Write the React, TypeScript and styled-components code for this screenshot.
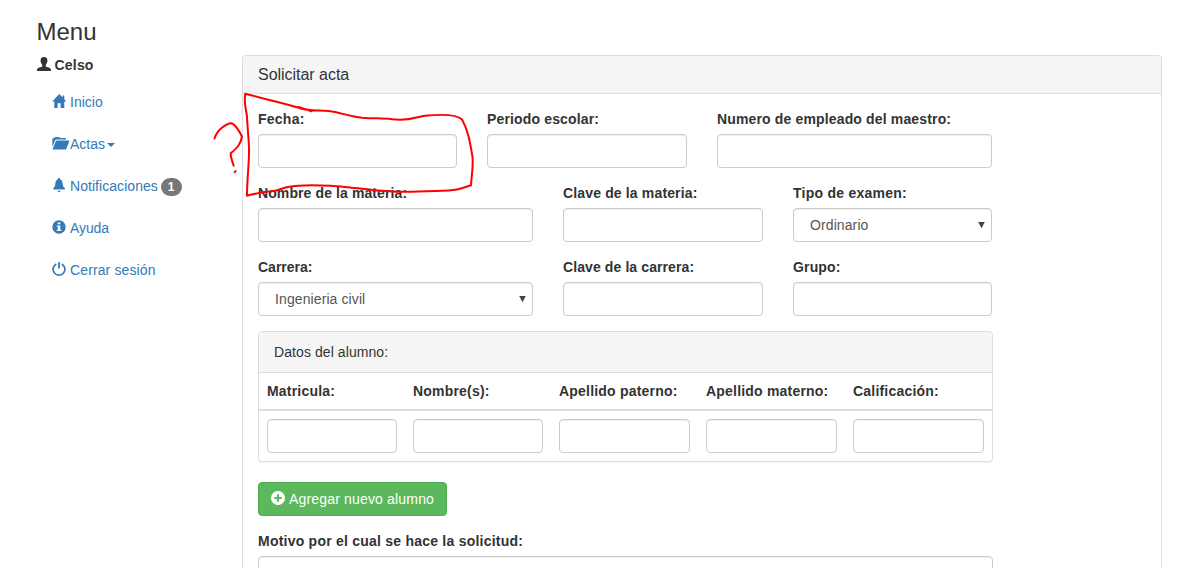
import React from 'react';
import styled, { createGlobalStyle, css } from 'styled-components';

const GlobalStyle = createGlobalStyle`
  *, *::before, *::after { box-sizing: border-box; }
  body {
    margin: 0;
    background: #fff;
    color: #333;
    font: 14px/20px "Liberation Sans", Arial, sans-serif;
  }
`;

const Page = styled.div`
  position: relative;
  display: flex;
  height: 568px;
  overflow: hidden;
`;

const Sidebar = styled.aside`
  width: 242px;
  flex: none;
  padding: 19px 0 0 36.5px;
`;

const MenuTitle = styled.h3`
  margin: 0 0 10px;
  font-size: 24px;
  line-height: 26px;
  font-weight: 400;
`;

const UserName = styled.div`
  display: flex;
  align-items: center;
  gap: 4px;
  height: 20px;
  font-weight: 700;
  letter-spacing: 0.2px;
`;

const Nav = styled.nav`
  display: flex;
  flex-direction: column;
  gap: 2px;
  margin-top: 7px;
`;

const NavLink = styled.a<{ $spacing?: number }>`
  display: flex;
  align-items: center;
  height: 40px;
  padding: 0 15px;
  color: #337ab7;
  text-decoration: none;
  letter-spacing: ${(p) => p.$spacing ?? 0}px;
`;

const NavIcon = styled.span`
  display: flex;
  width: 18.5px;
  flex: none;
`;

const Caret = styled.span`
  margin-left: 2px;
  margin-top: 2px;
  border-top: 4px solid;
  border-left: 4px solid transparent;
  border-right: 4px solid transparent;
`;

const Badge = styled.span`
  margin: 1px 0 0 3px;
  height: 18px;
  padding: 3px 7px;
  border-radius: 10px;
  background: #777;
  color: #fff;
  font-size: 12px;
  line-height: 12px;
  font-weight: 700;
`;

const Panel = styled.section<{ $wide?: boolean }>`
  width: ${(p) => (p.$wide ? '920px' : '735px')};
  flex: none;
  border: 1px solid #ddd;
  border-radius: 4px;
  background: #fff;
  box-shadow: 0 1px 1px rgba(0, 0, 0, 0.05);
  ${(p) => p.$wide && css`margin-top: 55px; height: 700px;`}
`;

const PanelHeading = styled.header<{ $large?: boolean }>`
  padding: 10px 15px;
  border-bottom: 1px solid #ddd;
  border-radius: 3px 3px 0 0;
  background: #f5f5f5;
  font-size: ${(p) => (p.$large ? '16px' : '14px')};
  line-height: ${(p) => (p.$large ? '17px' : '20px')};
  letter-spacing: ${(p) => (p.$large ? '-0.03px' : '0.08px')};
`;

const PanelBody = styled.div`
  padding: 15px;
`;

const FormRow = styled.div<{ $columns: string }>`
  display: grid;
  grid-template-columns: ${(p) => p.$columns};
  column-gap: 30px;
  width: 734px;
  margin-bottom: 15px;
`;

const Label = styled.label<{ $spacing?: number }>`
  display: block;
  margin-bottom: 5px;
  font-weight: 700;
  white-space: nowrap;
  letter-spacing: ${(p) => p.$spacing ?? 0.15}px;
`;

const control = css`
  display: block;
  width: 100%;
  height: 34px;
  border: 1px solid #ccc;
  border-radius: 4px;
  background: #fff;
  box-shadow: inset 0 1px 1px rgba(0, 0, 0, 0.075);
  color: #555;
  font: inherit;
  outline: none;
`;

const Input = styled.input`
  ${control}
  padding: 6px 12px;
`;

const SelectBox = styled.div`
  ${control}
  display: flex;
  align-items: center;
  justify-content: space-between;
  padding: 0 6px 0 16px;
  letter-spacing: 0.1px;
`;

const TextArea = styled.textarea`
  ${control}
  width: 735px;
  height: 90px;
  resize: none;
`;

const Table = styled.table`
  width: 100%;
  table-layout: fixed;
  border-collapse: separate;
  border-spacing: 0;
`;

const HeadCell = styled.th<{ $width: number }>`
  width: ${(p) => p.$width}px;
  padding: 8px;
  border-bottom: 2px solid #ddd;
  text-align: left;
  white-space: nowrap;
  letter-spacing: 0.2px;
`;

const Cell = styled.td`
  padding: 8px;
`;

const AddButton = styled.button`
  display: flex;
  align-items: center;
  gap: 4px;
  width: 189px;
  height: 34px;
  margin: 20px 0 15px;
  padding: 0 12px;
  border: 1px solid #4cae4c;
  border-radius: 4px;
  background: #5cb85c;
  color: #fff;
  font: inherit;
  letter-spacing: 0.17px;
  white-space: nowrap;
`;

const Ink = styled.svg`
  position: absolute;
  left: 0;
  top: 0;
  pointer-events: none;
`;

const GlyphSvg = styled.svg`
  flex: none;
  margin-bottom: 2px;
`;

const Glyph = ({ w = 14, h = 14, children }: { w?: number; h?: number; children: React.ReactNode }) => (
  <GlyphSvg width={w} height={h} viewBox={`0 0 ${w} ${h}`} fill="currentColor">
    {children}
  </GlyphSvg>
);

const UserIcon = () => (
  <Glyph>
    <path d="M7 0C4.600 0 3.500 1.500 3.700 3.400 3.300 3.600 3.400 4.900 4 5.200 4.200 6.600 4.800 7.300 5.300 7.900V9.200C4.600 10.200 1.200 10.400.4 11.600 .1 12.200 0 13.300 0 14H14C14 13.300 13.900 12.200 13.600 11.600 12.800 10.400 9.400 10.200 8.700 9.200V7.900C9.200 7.300 9.800 6.600 10 5.200 10.600 4.900 10.700 3.600 10.300 3.400 10.500 1.500 9.400 0 7 0Z" />
  </Glyph>
);

const HomeIcon = () => (
  <Glyph>
    <path d="M7.300 0 .2 7.500H2.300V14H5.600V9.200H8.600V14H12.300V7.500H14.400L12.300 5.300V1.500H10.500V3.400Z" />
  </Glyph>
);

const FolderIcon = () => (
  <Glyph w={18} h={14}>
    <path d="M.4 11.200V2.200H2.100C2.500 2.200 2.600.9 3.400.9H7C7.800.9 7.900 1.900 8.500 1.900H13.200C13.800 1.900 14.100 2.200 14.100 3.400H4.600C3.800 3.400 3.400 3.700 3.200 4.200ZM4 5.100C4.200 4.700 4.400 4.500 4.800 4.500H17C17.400 4.500 17.500 4.800 17.300 5.200L14.200 13C14 13.400 13.800 13.600 13.400 13.600H1C.6 13.600.5 13.300.7 12.900Z" />
  </Glyph>
);

const BellIcon = () => (
  <Glyph>
    <path d="M7 0C7.700 0 8.100.5 8.100 1.200 10 1.800 10.500 3.500 10.700 5.700 10.900 8 11.300 8.700 12.900 10.100V11.500H1.300V10.100C2.800 8.700 3.100 8 3.300 5.700 3.500 3.500 4.100 1.800 5.900 1.200 5.900.5 6.300 0 7 0ZM5.500 12.700H8.600C8.500 13.500 8 14 7 14S5.600 13.500 5.500 12.700Z" />
  </Glyph>
);

const InfoIcon = () => (
  <Glyph>
    <path fillRule="evenodd" d="M7 .3A6.700 6.700 0 1 1 7 13.700 6.700 6.700 0 0 1 7 .3ZM5.800 2.400V4.300H8.300V2.400ZM4.800 5.500V6.800H5.800V9.800H4.800V11.100H9.300V9.800H8.300V5.500Z" />
  </Glyph>
);

const PowerIcon = () => (
  <Glyph>
    <path d="M4.300 2A5.900 5.900 0 1 0 9.700 2" fill="none" stroke="currentColor" strokeWidth="1.7" />
    <rect x="6.100" y="0" width="1.800" height="6.600" rx=".5" />
  </Glyph>
);

const PlusIcon = () => (
  <Glyph>
    <path fillRule="evenodd" d="M7 0A7 7 0 1 1 7 14 7 7 0 0 1 7 0ZM5.900 3.200V5.900H3.200V8.100H5.900V10.800H8.100V8.100H10.800V5.900H8.100V3.200Z" />
  </Glyph>
);

const Field = ({ label, value, spacing }: { label: string; value?: string; spacing?: number }) => (
  <div>
    <Label $spacing={spacing}>{label}</Label>
    {value ? (
      <SelectBox>
        {value}
        <svg width="7" height="7" viewBox="0 0 7 7">
          <path d="M.2 0H6.800L3.500 6.300Z" fill="#444" />
        </svg>
      </SelectBox>
    ) : (
      <Input />
    )}
  </div>
);

const navItems = [
  { text: 'Inicio', icon: <HomeIcon /> },
  { text: 'Actas', icon: <FolderIcon />, caret: true },
  { text: 'Notificaciones', icon: <BellIcon />, badge: '1', spacing: 0.05 },
  { text: 'Ayuda', icon: <InfoIcon />, spacing: -0.1 },
  { text: 'Cerrar sesión', icon: <PowerIcon />, spacing: 0.12 },
];

const studentColumns = [
  { name: 'Matricula:', width: 146 },
  { name: 'Nombre(s):', width: 146 },
  { name: 'Apellido paterno:', width: 147 },
  { name: 'Apellido materno:', width: 147 },
  { name: 'Calificación:', width: 147 },
];

export default function App() {
  return (
    <Page>
      <GlobalStyle />
      <Sidebar>
        <MenuTitle>Menu</MenuTitle>
        <UserName>
          <UserIcon />
          Celso
        </UserName>
        <Nav>
          {navItems.map((item) => (
            <NavLink key={item.text} $spacing={item.spacing}>
              <NavIcon>{item.icon}</NavIcon>
              {item.text}
              {item.caret && <Caret />}
              {item.badge && <Badge>{item.badge}</Badge>}
            </NavLink>
          ))}
        </Nav>
      </Sidebar>
      <Panel $wide>
        <PanelHeading $large>Solicitar acta</PanelHeading>
        <PanelBody>
          <FormRow $columns="199px 200px 1fr">
            <Field label="Fecha:" spacing={0.25} />
            <Field label="Periodo escolar:" />
            <Field label="Numero de empleado del maestro:" />
          </FormRow>
          <FormRow $columns="1fr 200px 199px">
            <Field label="Nombre de la materia:" spacing={0.1} />
            <Field label="Clave de la materia:" />
            <Field label="Tipo de examen:" value="Ordinario" spacing={0.25} />
          </FormRow>
          <FormRow $columns="1fr 200px 199px">
            <Field label="Carrera:" value="Ingenieria civil" spacing={0} />
            <Field label="Clave de la carrera:" spacing={0.1} />
            <Field label="Grupo:" />
          </FormRow>
          <Panel>
            <PanelHeading>Datos del alumno:</PanelHeading>
            <Table>
              <thead>
                <tr>
                  {studentColumns.map((column) => (
                    <HeadCell key={column.name} $width={column.width}>
                      {column.name}
                    </HeadCell>
                  ))}
                </tr>
              </thead>
              <tbody>
                <tr>
                  {studentColumns.map((column) => (
                    <Cell key={column.name}>
                      <Input />
                    </Cell>
                  ))}
                </tr>
              </tbody>
            </Table>
          </Panel>
          <AddButton>
            <PlusIcon />
            Agregar nuevo alumno
          </AddButton>
          <Label $spacing={0.23}>Motivo por el cual se hace la solicitud:</Label>
          <TextArea />
        </PanelBody>
      </Panel>
      <Ink width="500" height="210" viewBox="0 0 500 210" fill="none" stroke="#f00" strokeWidth="2" strokeLinecap="round" strokeLinejoin="round">
        <path d="M311.500 111.300 298.500 107M245.300 93.700C262 98.500 280 102 298 107.500 309 112 319 109.500 329 111 340 112.500 350 116.500 362 117.700 375 118.700 382 118 392 119.200 412 121.500 415 116.500 427 115.500 438 114.600 456 113.500 462 119.500 468 130 470 142 472.500 157 473.500 166 471.500 176 471 185.300 465 187.500 459 189.500 453.300 190 440 191.500 425 191 412 191.700 390 192.500 372 189.500 352 187.700 335 186 305 184 288 187 281 188.500 279 190.500 272 191.200 263 191.500 255 194 247 195.700 247 178 249.500 160 249 148 248.700 138 247.500 128 247 117 246.500 109 243.500 105 245.300 93.700" />
        <path d="M214.500 138.500C217 130 226 123.500 231.700 123.300 235 124.500 240 132 242 136.700 240.500 144.500 237.500 147.500 230.700 153.300 230.500 157 232 161 233.700 165.700M235.600 171 234.700 172.200" />
      </Ink>
    </Page>
  );
}
